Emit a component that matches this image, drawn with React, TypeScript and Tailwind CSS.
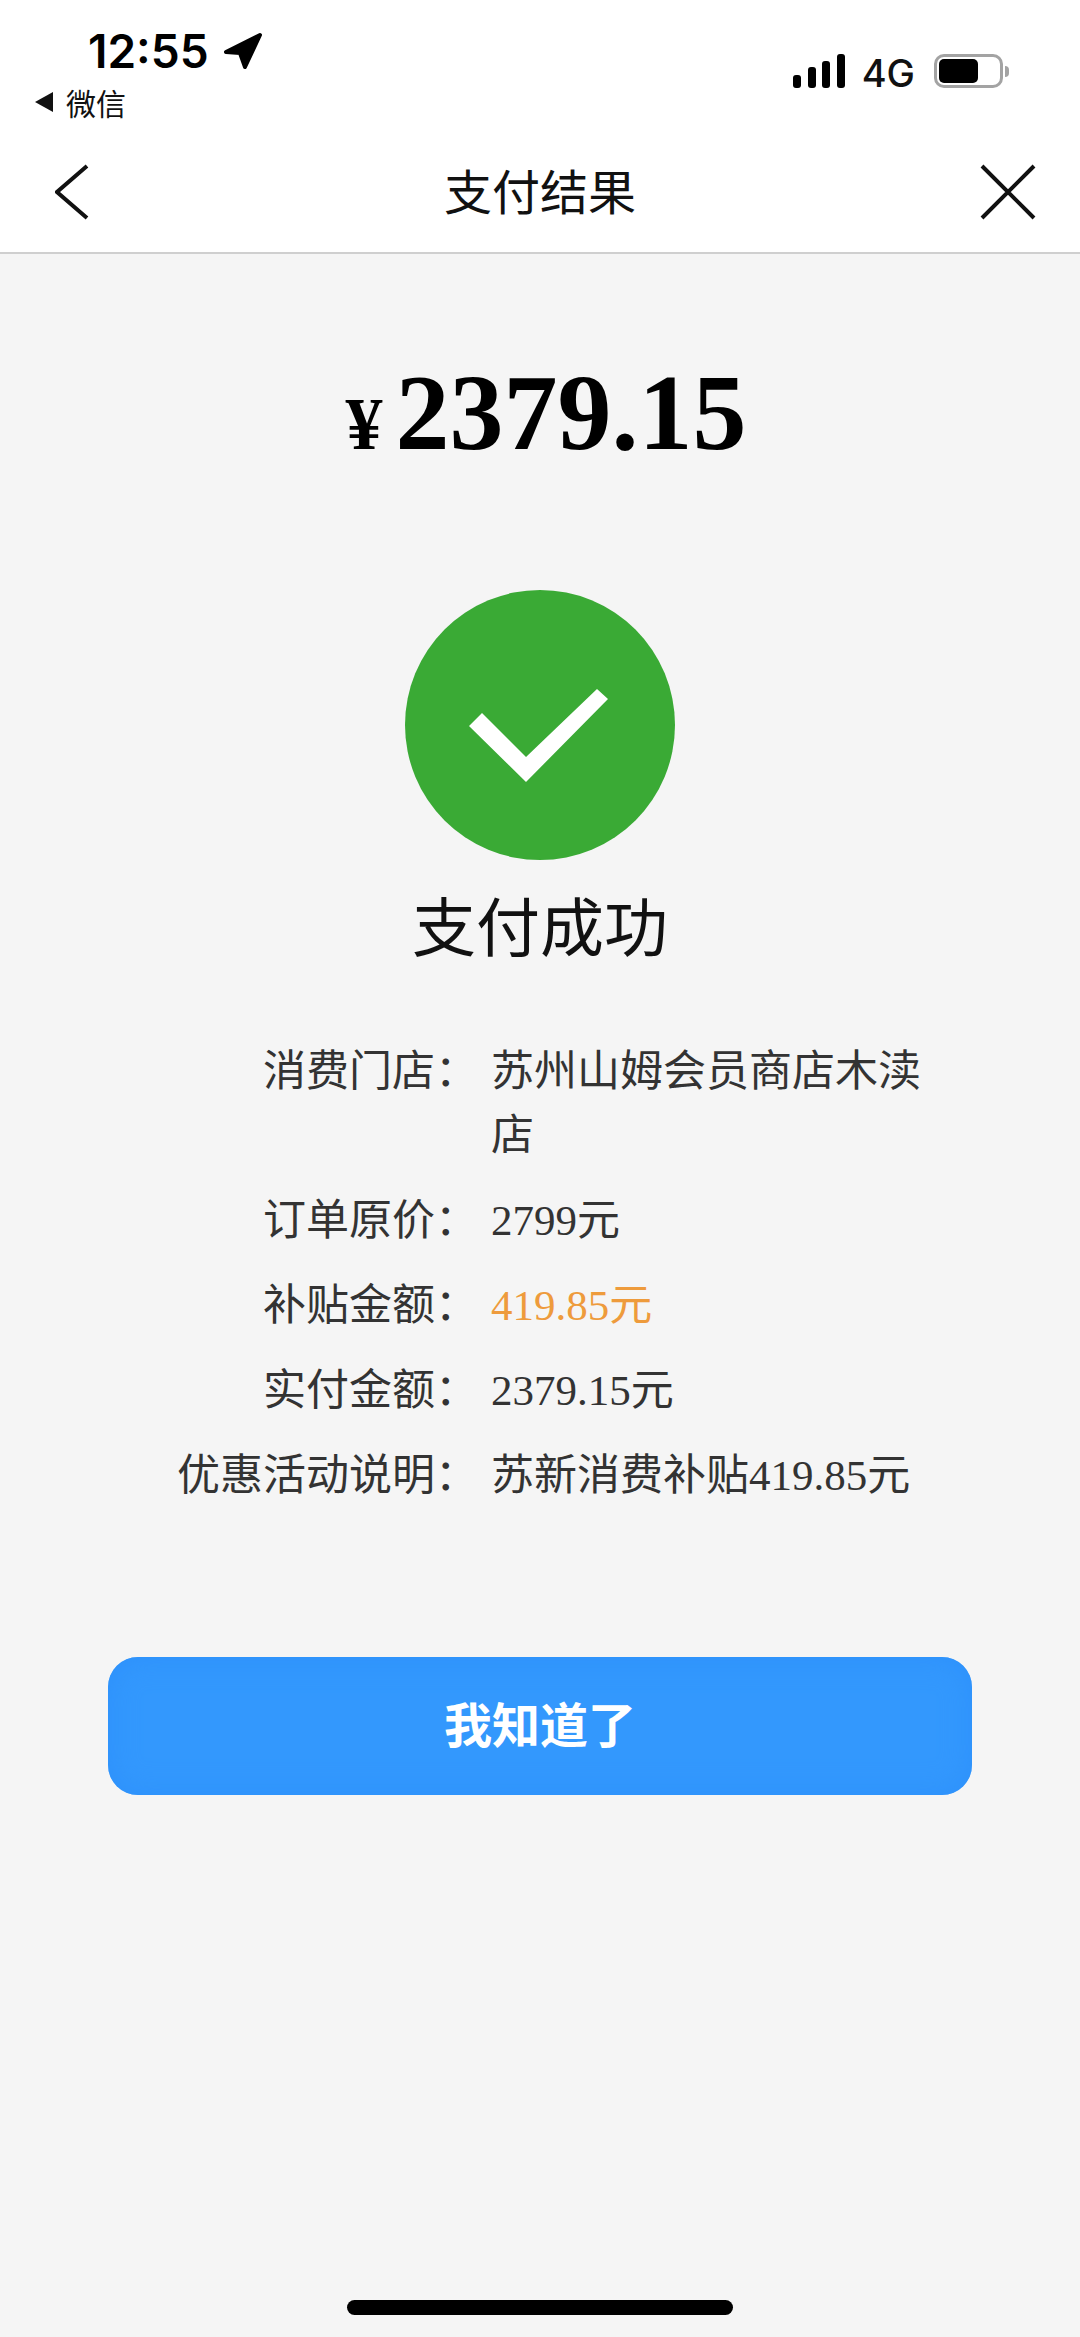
const rows = [
  { label: '消费门店：', value: '苏州山姆会员商店木渎店' },
  { label: '订单原价：', value: '2799元' },
  { label: '补贴金额：', value: '419.85元', orange: true },
  { label: '实付金额：', value: '2379.15元' },
  { label: '优惠活动说明：', value: '苏新消费补贴419.85元' },
];

const StatusBar = () => (
  <div className="h-[144px] flex justify-between">
    <div className="pl-[35px]">
      <div className="flex items-center h-[50px] mt-[26px] pl-[53px]">
        <span className="text-[46px] leading-[50px] font-semibold text-black font-['Inter',sans-serif]">12:55</span>
        <svg className="ml-[14px]" width="40" height="38" viewBox="0 0 40 38">
          <path d="M37 3 L3 20 L17 21 L22 35 Z" fill="#000" stroke="#000" strokeWidth="4" strokeLinejoin="round" />
        </svg>
      </div>
      <div className="flex items-center mt-[11px] h-[30px]">
        <svg width="18" height="20" viewBox="0 0 18 20">
          <path d="M18 0 L18 20 L0 10 Z" fill="#111" />
        </svg>
        <span className="ml-[13px] text-[30px] leading-[30px] text-[#111] font-['Noto_Sans_CJK_SC',sans-serif]">微信</span>
      </div>
    </div>
    <div className="flex items-center h-[34px] mt-[54px] pr-[71px]">
      <svg width="54" height="34" viewBox="0 0 54 34">
        <rect x="1" y="21" width="8" height="13" rx="3" fill="#000" />
        <rect x="16" y="13" width="8" height="21" rx="3" fill="#000" />
        <rect x="30" y="7" width="8" height="27" rx="3" fill="#000" />
        <rect x="45" y="0" width="8" height="34" rx="3" fill="#000" />
      </svg>
      <span className="ml-[16px] mt-[3px] text-[38px] leading-[34px] font-medium text-[#111] font-['Inter',sans-serif]">4G</span>
      <div className="ml-[19px] w-[69px] h-[34px] rounded-[10px] border-[3px] border-[#a3a3a3] bg-white p-[2px]">
        <div className="w-[39px] h-full rounded-[5px] bg-black" />
      </div>
      <div className="ml-[2px] w-[4px] h-[11px] rounded-r-full bg-[#a3a3a3]" />
    </div>
  </div>
);

const TitleBar = () => (
  <div className="h-[110px] grid grid-cols-[1fr_auto_1fr] items-center px-[44px] border-b-2 border-[#cfcfcf]">
    <svg width="34" height="56" viewBox="0 0 34 56" className="-mt-[12px] ml-[11px]">
      <path d="M32 2 L2 28 L32 54" fill="none" stroke="#111" strokeWidth="4" />
    </svg>
    <span className="-mt-[19px] text-[48px] leading-[60px] text-[#111] font-['Noto_Sans_CJK_SC',sans-serif]">支付结果</span>
    <svg width="56" height="56" viewBox="0 0 56 56" className="-mt-[12px] justify-self-end">
      <path d="M2 2 L54 54 M54 2 L2 54" fill="none" stroke="#111" strokeWidth="4" />
    </svg>
  </div>
);

export default function App() {
  return (
    <div className="w-[1080px] h-[2337px] bg-[#f5f5f5] flex flex-col overflow-hidden">
      <div className="bg-white">
        <StatusBar />
        <TitleBar />
      </div>

      <div className="flex justify-center items-baseline mt-[99px] pl-[12px] font-['Liberation_Serif',serif] font-bold text-black">
        <span className="text-[74px] leading-[120px] mr-[13px]">¥</span>
        <span className="text-[108px] leading-[120px]">2379.15</span>
      </div>

      <div className="mt-[106px] self-center w-[270px] h-[270px] rounded-full bg-[#3aaa35]">
        <svg width="270" height="270" viewBox="0 0 270 270">
          <path d="M77 123 L64 136 L121 192 L203 109 L192 99 L121 167 Z" fill="#fff" />
        </svg>
      </div>

      <div className="mt-[18px] text-center text-[64px] leading-[90px] text-[#111] font-['Noto_Sans_CJK_SC',sans-serif]">支付成功</div>

      <div className="mt-[72px] flex flex-col gap-[21px] text-[43px] leading-[64px] text-[#333] font-['Liberation_Serif','Noto_Sans_CJK_SC',serif]">
        {rows.map((row) => (
          <div key={row.label} className="flex">
            <div className="w-[478px] shrink-0 text-right">{row.label}</div>
            <div className={`ml-[13px] w-[445px] ${row.orange ? 'text-[#ee9b3c]' : ''}`}>{row.value}</div>
          </div>
        ))}
      </div>

      <button className="mt-[149px] self-center w-[864px] h-[138px] pb-[8px] rounded-[30px] bg-[#3398fd] shadow-[inset_0_0_30px_#2d90fb] text-white text-[48px] font-bold font-['Noto_Sans_CJK_SC',sans-serif]">
        我知道了
      </button>

      <div className="mt-auto mb-[22px] self-center w-[386px] h-[15px] rounded-full bg-black" />
    </div>
  );
}
